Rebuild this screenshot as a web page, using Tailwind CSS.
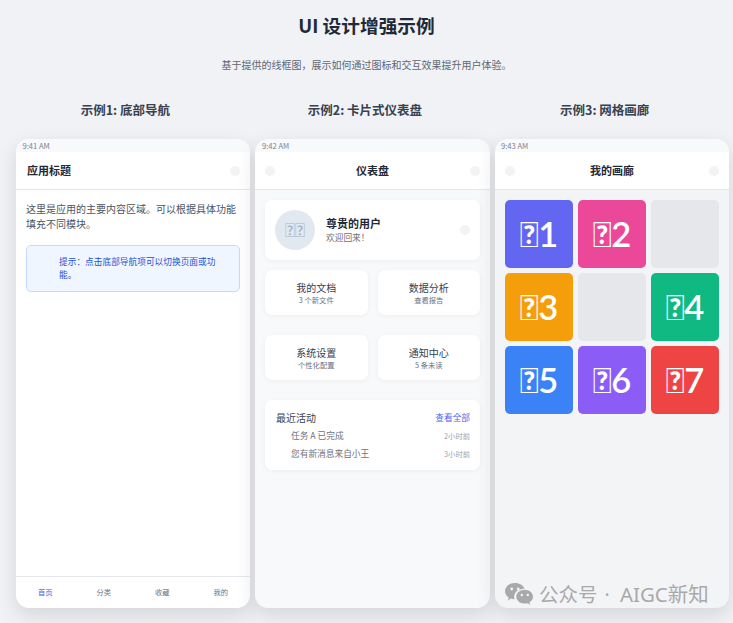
<!DOCTYPE html>
<html lang="zh-CN">
<head>
  <meta charset="UTF-8" />
  <meta name="viewport" content="width=device-width, initial-scale=1.0"/>
  <title>UI 设计增强示例</title>
  <script src="https://cdn.jsdelivr.net/npm/@tailwindcss/browser@4"></script>
</head>
<body class="bg-[#f0f2f5] text-[#1f2937] font-['Noto_Sans_CJK_SC',sans-serif]">
<div class="relative h-[623px] w-[733px] overflow-hidden">

  <!-- Page title -->
  <h1 class="pt-[10px] text-center text-[18.7px] leading-[30px] font-bold">UI 设计增强示例</h1>
  <p class="mt-[15px] text-center text-[10px] leading-[20px] text-[#5f6672]">基于提供的线框图，展示如何通过图标和交互效果提升用户体验。</p>

  <!-- Column headings -->
  <div class="mt-[26px] ml-[8px] grid w-[714px] grid-cols-3 gap-[5px] text-center text-[12.5px] leading-[18px] font-semibold text-[#374151]">
    <h2>示例1: 底部导航</h2>
    <h2>示例2: 卡片式仪表盘</h2>
    <h2>示例3: 网格画廊</h2>
  </div>

  <div class="mt-[20px] ml-[16px] flex h-[469px] w-[713px] gap-[5px]">

    <!-- Phone 1: bottom nav -->
    <section class="flex w-[234px] flex-col overflow-hidden rounded-[13px] bg-white shadow-[0_7px_20px_rgba(0,0,0,0.12)]">
      <div class="h-[13px] bg-[#f8f9fb] pl-[6.5px] text-[7.6px] leading-[13px] text-[#7b8290]">9:41 AM</div>
      <header class="flex h-[38px] items-center justify-between border-b border-[#e5e7eb] pr-[10px] pl-[11px]">
        <span class="text-[11px] font-semibold">应用标题</span>
        <span class="size-[10px] rounded-full bg-[#f1f3f5]"></span>
      </header>
      <main class="flex-1 px-[10px] pt-[11px]">
        <p class="text-[10px] leading-[15px] text-[#4b5563]">这里是应用的主要内容区域。可以根据具体功能填充不同模块。</p>
        <div class="mt-[14px] h-[47px] rounded-[5px] border border-[#bfdbfe] bg-[#eff6ff] pt-[9px] pr-[8px] pl-[32px] text-[8.7px] leading-[13px] text-[#1d4ed8]">提示：点击底部导航项可以切换页面或功能。</div>
      </main>
      <nav class="grid h-[32px] grid-cols-4 items-center border-t border-[#e5e7eb] text-center text-[7.3px] text-[#6b7280]">
        <a class="text-[#3b5bf0]">首页</a>
        <a>分类</a>
        <a>收藏</a>
        <a>我的</a>
      </nav>
    </section>

    <!-- Phone 2: card dashboard -->
    <section class="flex w-[235px] flex-col overflow-hidden rounded-[13px] bg-[#f8f9fb] shadow-[0_7px_20px_rgba(0,0,0,0.12)]">
      <div class="h-[13px] pl-[7px] text-[7.6px] leading-[13px] text-[#7b8290]">9:42 AM</div>
      <header class="flex h-[38px] items-center justify-between border-b border-[#e5e7eb] bg-white px-[10px]">
        <span class="size-[10px] rounded-full bg-[#f1f3f5]"></span>
        <span class="text-[11px] font-semibold">仪表盘</span>
        <span class="size-[10px] rounded-full bg-[#f1f3f5]"></span>
      </header>
      <main class="px-[10px] pt-[10px]">
        <div class="flex h-[60px] items-center rounded-[7px] bg-white px-[10px] shadow-[0_1px_5px_rgba(0,0,0,0.05)]">
          <div class="flex size-[40px] items-center justify-center rounded-full bg-[#e2e8f0] font-['Lato',sans-serif] text-[18.7px] text-[#a8b4c6]">&#xF0000;&#xF0001;</div>
          <div class="ml-[11px] flex-1">
            <div class="text-[11px] leading-[15px] font-semibold">尊贵的用户</div>
            <div class="text-[8.7px] leading-[13px] text-[#6b7280]">欢迎回来！</div>
          </div>
          <span class="size-[10px] rounded-full bg-[#f1f3f5]"></span>
        </div>
        <div class="mt-[10px] grid grid-cols-2 gap-x-[10px] gap-y-[20px]">
          <div class="h-[45px] rounded-[7px] bg-white pt-[11px] text-center shadow-[0_1px_5px_rgba(0,0,0,0.05)]">
            <div class="text-[10px] leading-[14px] text-[#374151]">我的文档</div>
            <div class="text-[7.3px] leading-[10px] text-[#6b7280]">3 个新文件</div>
          </div>
          <div class="h-[45px] rounded-[7px] bg-white pt-[11px] text-center shadow-[0_1px_5px_rgba(0,0,0,0.05)]">
            <div class="text-[10px] leading-[14px] text-[#374151]">数据分析</div>
            <div class="text-[7.3px] leading-[10px] text-[#6b7280]">查看报告</div>
          </div>
          <div class="h-[45px] rounded-[7px] bg-white pt-[11px] text-center shadow-[0_1px_5px_rgba(0,0,0,0.05)]">
            <div class="text-[10px] leading-[14px] text-[#374151]">系统设置</div>
            <div class="text-[7.3px] leading-[10px] text-[#6b7280]">个性化配置</div>
          </div>
          <div class="h-[45px] rounded-[7px] bg-white pt-[11px] text-center shadow-[0_1px_5px_rgba(0,0,0,0.05)]">
            <div class="text-[10px] leading-[14px] text-[#374151]">通知中心</div>
            <div class="text-[7.3px] leading-[10px] text-[#6b7280]">5 条未读</div>
          </div>
        </div>
        <div class="mt-[20px] h-[70px] rounded-[7px] bg-white pt-[11px] pr-[10px] pl-[11px] shadow-[0_1px_5px_rgba(0,0,0,0.05)]">
          <div class="flex items-center justify-between leading-[14px]">
            <span class="text-[10px] text-[#374151]">最近活动</span>
            <span class="text-[8.7px] text-[#4f5fef]">查看全部</span>
          </div>
          <div class="mt-[2px] flex h-[18px] items-center justify-between pl-[15px]">
            <span class="text-[8.7px] text-[#6b7280]">任务 A 已完成</span>
            <span class="text-[7.3px] text-[#9ca3af]">2小时前</span>
          </div>
          <div class="flex h-[18px] items-center justify-between pl-[15px]">
            <span class="text-[8.7px] text-[#6b7280]">您有新消息来自小王</span>
            <span class="text-[7.3px] text-[#9ca3af]">3小时前</span>
          </div>
        </div>
      </main>
    </section>

    <!-- Phone 3: grid gallery -->
    <section class="flex w-[234px] flex-col overflow-hidden rounded-[13px] bg-[#f3f4f6] shadow-[0_7px_20px_rgba(0,0,0,0.12)]">
      <div class="h-[13px] bg-[#f8f9fb] pl-[6px] text-[7.6px] leading-[13px] text-[#7b8290]">9:43 AM</div>
      <header class="flex h-[38px] items-center justify-between border-b border-[#e5e7eb] bg-white px-[10px]">
        <span class="size-[10px] rounded-full bg-[#f1f3f5]"></span>
        <span class="text-[11px] font-semibold">我的画廊</span>
        <span class="size-[10px] rounded-full bg-[#f1f3f5]"></span>
      </header>
      <main class="grid grid-cols-3 gap-[5px] px-[10px] pt-[10px] font-['Lato',sans-serif] text-[34.5px] font-semibold text-white">
        <div class="flex h-[68px] items-center justify-center rounded-[5px] bg-[#6366f1]">&#xF0000;1</div>
        <div class="flex h-[68px] items-center justify-center rounded-[5px] bg-[#ec4899]">&#xF0000;2</div>
        <div class="h-[68px] rounded-[5px] bg-[#e5e7eb]"></div>
        <div class="flex h-[68px] items-center justify-center rounded-[5px] bg-[#f59e0b]">&#xF0000;3</div>
        <div class="h-[68px] rounded-[5px] bg-[#e5e7eb]"></div>
        <div class="flex h-[68px] items-center justify-center rounded-[5px] bg-[#10b981]">&#xF0000;4</div>
        <div class="flex h-[68px] items-center justify-center rounded-[5px] bg-[#3b82f6]">&#xF0000;5</div>
        <div class="flex h-[68px] items-center justify-center rounded-[5px] bg-[#8b5cf6]">&#xF0000;6</div>
        <div class="flex h-[68px] items-center justify-center rounded-[5px] bg-[#ef4444]">&#xF0000;7</div>
      </main>
    </section>
  </div>

  <!-- Watermark over the last phone -->
  <div class="absolute top-[580px] left-[505px] flex items-center gap-[6px] font-['Noto_Sans','Noto_Sans_CJK_SC',sans-serif] text-[19.5px] leading-[28px] text-[#a9a9a9]">
    <svg class="h-[23px] w-[28px]" viewBox="0 0 28 23" fill="#a9a9a9">
      <path d="M10 0C4.500 0 0 3.600 0 8.200c0 2.600 1.400 4.800 3.700 6.300L2.800 17.400l3.300-1.800c1.100.3 2.200.5 3.400.6-.3-.8-.4-1.600-.4-2.400 0-4.500 4.300-8.100 9.600-8.100h.8C18.300 2.300 14.500 0 10 0z"/>
      <path d="M28 13.700c0-3.800-3.700-6.900-8.300-6.900s-8.400 3.100-8.400 6.900 3.800 6.900 8.400 6.900c1 0 1.900-.1 2.800-.4l2.700 1.600-.8-2.600c2.200-1.200 3.600-3.200 3.600-5.500z"/>
      <circle cx="6.700" cy="6" r="1.400" fill="#f3f4f6"/>
      <circle cx="13.200" cy="6" r="1.400" fill="#f3f4f6"/>
      <circle cx="16.800" cy="12" r="1.200" fill="#f3f4f6"/>
      <circle cx="22.800" cy="12" r="1.200" fill="#f3f4f6"/>
    </svg>
    <span>公众号<span class="mr-[5px] ml-[2px]"> · </span><span class="text-[20.5px]">AIGC新知</span></span>
  </div>
</div>
</body>
</html>
